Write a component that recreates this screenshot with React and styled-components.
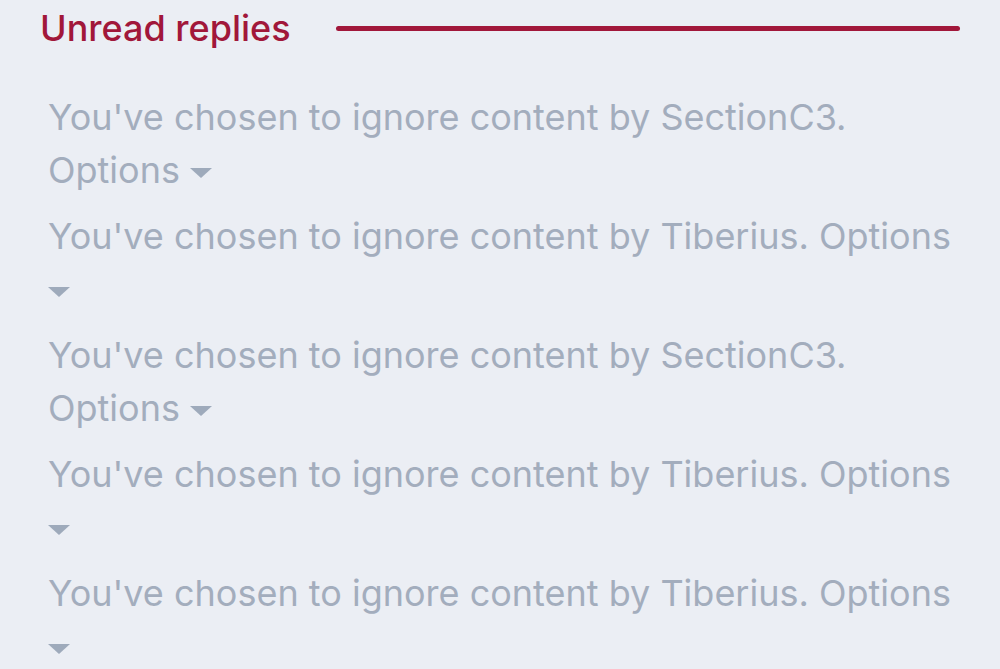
import styled, { createGlobalStyle } from 'styled-components';

const GlobalStyle = createGlobalStyle`
    html, body {
        margin: 0;
        padding: 0;
        background: #ebeef4;
    }
    body {
        font-family: Inter, 'Noto Sans', sans-serif;
    }
`;

const Page = styled.div`
    width: 1000px;
    height: 669px;
    overflow: hidden;
    box-sizing: border-box;
    padding: 2px 40px 0 40px;
    background: #ebeef4;
`;

const Header = styled.div`
    display: flex;
    align-items: center;
    gap: 45px;
    height: 52px;
`;

const Title = styled.h2`
    margin: 0;
    font-size: 36px;
    font-weight: 500;
    color: #a1173a;
    white-space: nowrap;
`;

const Rule = styled.div`
    flex: 1;
    height: 5px;
    border-radius: 3px;
    background: #a1173a;
`;

const List = styled.div`
    display: flex;
    flex-direction: column;
    gap: 14px;
    padding: 37px 0 0 8px;
`;

const Ignored = styled.div`
    font-size: 36px;
    line-height: 52.5px;
    color: #a3adbd;
`;

const Caret = styled.span`
    display: inline-block;
    width: 0;
    height: 0;
    vertical-align: middle;
    border-left: 11px solid transparent;
    border-right: 11px solid transparent;
    border-top: 10px solid #9eaabb;
`;

const items = ['SectionC3', 'Tiberius', 'SectionC3', 'Tiberius', 'Tiberius'];

const App = () => {
    return (
        <Page>
            <GlobalStyle />
            <Header>
                <Title>Unread replies</Title>
                <Rule />
            </Header>
            <List>
                {items.map((name, i) => (
                    <Ignored key={i}>
                        You've chosen to ignore content by {name}. Options <Caret />
                    </Ignored>
                ))}
            </List>
        </Page>
    );
};

export default App;
